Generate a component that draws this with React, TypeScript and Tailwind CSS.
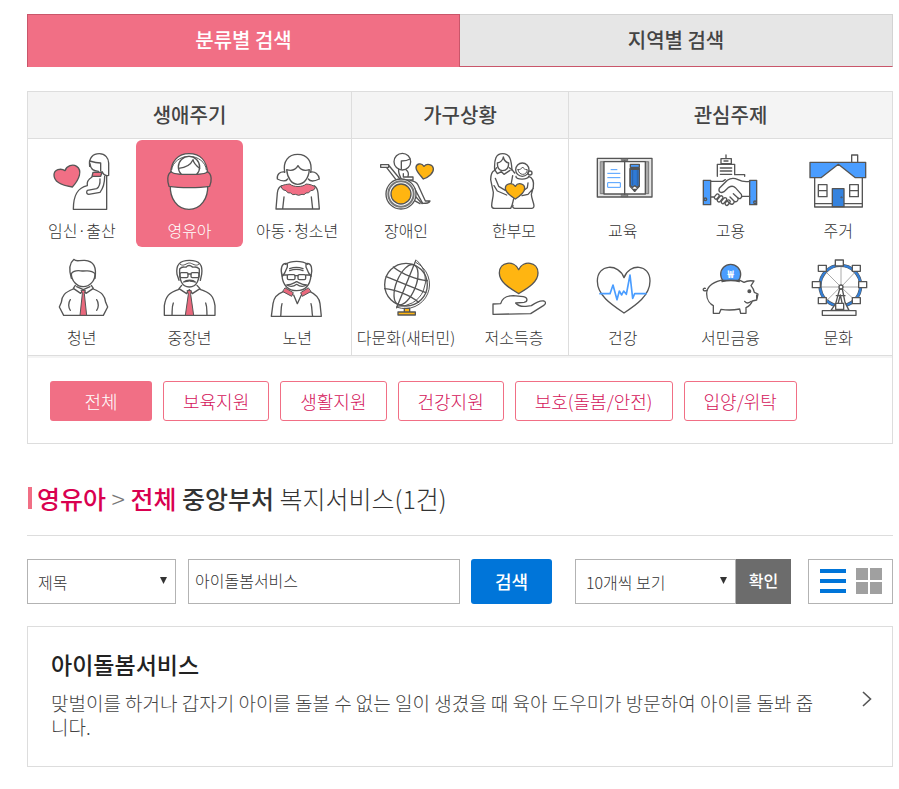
import type { ReactNode } from 'react'

interface Topic {
  label: string
  icon: ReactNode
  active?: boolean
}

interface TopicGroup {
  title: string
  className: string
  gridClassName: string
  topics: Topic[]
}

const PINK = '#f16f85'
const ORANGE = '#ffb511'
const BLUE = '#4a9dff'

function Icon({ viewBox, children }: { viewBox: string; children: ReactNode }) {
  return (
    <svg
      className="size-16"
      viewBox={viewBox}
      fill="none"
      stroke="#555"
      strokeWidth="4"
      strokeLinejoin="round"
      strokeLinecap="round"
      aria-hidden="true"
    >
      {children}
    </svg>
  )
}

const PregnancyIcon = (
  <Icon viewBox="90 45 192 192">
    <path fill={PINK} d="M157 156C130 152 102 142 102 120C102 104 122 98 135 107C140 92 158 86 170 94C188 106 178 134 157 156Z" />
    <path d="M209 94C205 68 220 56 238 56C256 56 266 70 266 84V121C257 124 250 118 246 110" />
    <path d="M209 78C222 82 230 84 242 84V108M210 86C211 100 220 109 236 109" />
    <path fill={PINK} d="M219 112L216 124H242L246 112Z" />
    <path d="M216 126C203 134 200 142 202 152C174 158 160 178 160 223H260V122" />
    <path d="M240 132C241 148 238 156 230 161L202 166C198 172 200 177 206 178L240 172C248 162 254 144 254 124" />
  </Icon>
)

const InfantIcon = (
  <Icon viewBox="412 45 192 192">
    <path fill="#fff" d="M453 116C454 78 476 56 508 56C542 56 562 78 564 116V150C566 190 544 223 508 223C472 223 450 190 452 150Z" />
    <circle cx="508" cy="96" r="32" />
    <path d="M456 104C458 82 482 64 508 64C536 64 558 82 560 104" strokeWidth="3" />
    <path d="M477 100C496 98 512 92 520 74C522 86 532 94 540 100" />
    <path fill={PINK} d="M455 110C441 118 443 140 448 154C480 159 538 159 570 154C576 140 578 118 563 110C558 121 460 121 455 110Z" />
  </Icon>
)

const ChildIcon = (
  <Icon viewBox="75 45 192 192">
    <path d="M134 112C128 78 146 58 173 58C202 58 218 80 212 112" />
    <path d="M140 104C142 130 156 148 173 148C192 148 206 130 208 104C196 108 182 106 174 92C166 106 152 108 140 104Z" />
    <path d="M134 111C120 109 110 118 112 132C124 138 136 142 143 132M212 111C226 109 236 118 238 132C226 138 212 142 205 132" />
    <path d="M126 152C116 156 113 164 112 174L108 222H238L234 174C233 164 230 156 222 152M132 186L128 222M214 186L218 222" />
    <path fill={PINK} d="M122 154C132 148 142 148 150 147C158 157 190 157 198 147C210 148 220 150 226 158q-4 10-14 9q-5 9-14 7q-6 8-12 4q-10 6-20 0q-8 4-14-4q-10 2-14-7q-10 1-16-13Z" strokeWidth="3" />
  </Icon>
)

const DisabilityIcon = (
  <Icon viewBox="402 45 192 192">
    <path d="M422 89H446V97H422ZM448 93L480 132M440 98L468 134" />
    <circle cx="487" cy="80" r="25" />
    <path d="M484 102V78C494 78 504 76 510 72" />
    <path d="M476 102C474 114 480 124 484 132M498 104C506 110 506 118 504 124M490 116V126H519V135H484" />
    <path d="M512 137C524 138 530 142 534 150L556 198H570C568 205 560 205 548 205L522 158" />
    <path d="M528 186L546 206M522 196L540 206" />
    <circle cx="483" cy="177" r="45" fill="#fff" />
    <circle cx="483" cy="177" r="38" strokeWidth="6" stroke="#777" />
    <circle cx="483" cy="177" r="30" fill={ORANGE} />
    <path fill={ORANGE} d="M550 132C540 120 528 108 528 98C528 86 544 82 552 94C560 84 578 88 580 100C582 114 566 126 550 132Z" />
  </Icon>
)

const SingleParentIcon = (
  <Icon viewBox="66 45 192 192">
    <path d="M104 106C102 72 108 56 128 56C150 56 154 74 156 106" />
    <path d="M112 84C112 100 118 107 128 107C140 107 146 98 146 84C138 82 132 76 130 66C128 78 122 82 112 84Z" />
    <path d="M104 104L112 116L124 110L132 118L150 106M110 98L104 106M148 98L156 104L164 114" />
    <path d="M104 106C94 110 92 120 92 134L100 172C100 188 95 200 95 212C95 218 98 220 104 220H152C160 206 158 196 162 190" />
    <path d="M106 130L116 154L136 166M102 152L112 168L140 180M158 122L154 144" />
    <circle cx="187" cy="104" r="20" />
    <path d="M174 104C176 122 200 124 202 104C194 104 190 100 188 96C184 102 180 104 174 104Z" strokeWidth="3" />
    <circle cx="210" cy="114" r="6" />
    <path d="M168 124C164 134 206 136 206 124C218 128 222 142 220 156L214 178C214 190 222 204 222 213Q222 219 216 220H164Q156 219 159 211M204 144L202 158L192 166M220 160L204 178L186 182" />
    <path fill={ORANGE} d="M166 192C150 182 136 172 136 160C136 146 156 140 166 154C174 140 194 146 194 160C194 172 182 182 166 192Z" />
  </Icon>
)

const EducationIcon = (
  <Icon viewBox="393 45 192 192">
    <rect x="412" y="70" width="164" height="116" fill="#e4e4e4" />
    <path fill="#aaa" strokeWidth="2" d="M422 80H432V176H422ZM556 80H566V176H556Z" />
    <rect x="432" y="80" width="124" height="97" fill="#fff" />
    <path fill="#888" strokeWidth="2" d="M485 71H503V77H485ZM485 178H503V185H485Z" />
    <path d="M494 78V178" />
    <g stroke={BLUE} strokeLinecap="butt">
      <path d="M452 104H472M442 115H481M442 128H481" strokeWidth="3" />
      <rect x="443" y="143" width="38" height="14" strokeWidth="3" />
    </g>
    <path fill="#fff" d="M510 154L524 169L538 154V100H510Z" />
    <path fill="#2f7ad6" d="M511 103H538V152L531 157L524 152L518 157L511 152Z" />
    <path d="M518 106V150M532 106V150" stroke="#2a5792" strokeWidth="2" />
    <rect x="511" y="88" width="27" height="9" fill={BLUE} />
    <path fill="#444" d="M520 163H528L524 169Z" />
  </Icon>
)

const EmploymentIcon = (
  <Icon viewBox="86 45 192 192">
    <path d="M170 60V70M155 71H186V86H155ZM164 78H176M144 124V88H196V119H226V124" />
    <path d="M153 99H187M153 108H187M153 118H187" />
    <path fill={BLUE} d="M102 136H124V209H102ZM241 136H262V209H241Z" />
    <circle cx="108" cy="193" r="4" />
    <circle cx="257" cy="202" r="4" />
    <path d="M124 139H160L168 134M241 139C222 142 214 138 206 134C194 128 182 130 174 136L150 160C146 170 154 176 164 170L178 157C186 152 192 152 198 158L216 178C220 188 212 194 206 189L192 176" />
    <path d="M124 186H134M241 184H219M206 189C208 198 200 203 194 198L182 186M194 198C196 206 188 210 182 206L174 198" />
    <rect x="134" y="180" width="17" height="10" rx="5" transform="rotate(-50 142 185)" />
    <rect x="142" y="187" width="21" height="10" rx="5" transform="rotate(-50 152 192)" />
    <rect x="154" y="192" width="20" height="10" rx="5" transform="rotate(-50 164 197)" />
    <rect x="166" y="198" width="18" height="10" rx="5" transform="rotate(-50 175 203)" />
  </Icon>
)

const HousingIcon = (
  <Icon viewBox="409 45 192 192">
    <path d="M546 82V60H564V82M435 128V216H578V128M435 206H488M524 206H578" />
    <path fill={BLUE} d="M421 82H588V128H557L506 88L454 128H421Z" />
    <path d="M446 149H472V185H446ZM446 167H472M540 149H566V185H540ZM540 167H566" />
    <path fill="#3583df" d="M488 161H523V215H488Z" />
    <circle cx="515" cy="187" r="2" strokeWidth="2" />
  </Icon>
)

const YouthIcon = (
  <Icon viewBox="90 36 192 192">
    <path d="M154 100C148 80 146 56 162 43C168 52 178 45 194 46C222 48 230 66 225 100" />
    <path d="M154 86C164 72 178 78 190 78C204 78 214 74 225 86C226 108 208 125 190 125C172 125 154 108 154 86Z" />
    <path d="M166 121L160 130L182 145L190 134L198 145L220 130L214 121M170 125L190 134L210 125" />
    <path d="M160 132C134 142 126 152 124 172L118 186L131 211H250L263 186L257 172C254 152 246 142 220 132M151 164C144 174 145 188 151 196M230 164C237 174 236 188 230 196" />
    <path fill="#e9687c" d="M184 136H196L193 146L200 211H180L187 146Z" strokeWidth="3" />
  </Icon>
)

const MiddleAgedIcon = (
  <Icon viewBox="412 36 192 192">
    <path d="M472 88C468 60 480 46 509 46C540 46 550 60 546 88L542 106M472 88L478 106" />
    <path d="M480 72C478 104 486 126 509 126C532 126 540 104 539 72C530 62 524 68 518 66C512 60 504 60 500 66C494 68 488 62 480 72Z" />
    <path d="M482 58C492 66 500 54 509 54C518 54 528 66 537 58" strokeWidth="3" />
    <rect x="481" y="83" width="24" height="15" rx="4" />
    <rect x="514" y="83" width="24" height="15" rx="4" />
    <path d="M505 87H514" />
    <path fill="#505050" d="M492 111C500 104 520 104 527 111C518 108 514 110 509 107C504 110 500 108 492 111Z" />
    <path d="M486 121L478 131L501 146L509 134L518 146L541 131L532 121" />
    <path d="M478 133C448 142 438 154 434 182V211H586V182C582 154 572 142 541 133M461 174C456 186 458 198 457 211M558 174C563 186 561 198 562 211" />
    <path fill="#e9687c" d="M503 137H515L513 148L522 211H497L506 148Z" strokeWidth="3" />
  </Icon>
)

const SeniorIcon = (
  <Icon viewBox="75 36 192 192">
    <path d="M137 58C152 46 188 46 202 58" />
    <path d="M142 56C124 52 120 74 127 94L134 84L142 66ZM198 56C216 52 218 74 213 94L206 84L198 66Z" />
    <path d="M126 92C128 122 146 137 170 137C194 137 210 122 213 92M130 90H142M198 90H210" />
    <path d="M149 71C160 67 178 67 189 71M149 77C160 73 178 73 189 77" />
    <rect x="142" y="89" width="23" height="15" rx="4" />
    <rect x="174" y="89" width="23" height="15" rx="4" />
    <path d="M165 92H174M140 120C156 120 164 112 170 110C176 112 184 120 200 120C190 126 178 124 170 118C162 124 150 126 140 120Z" />
    <path d="M130 140C108 148 101 160 99 176L94 214H244L240 176C238 160 228 148 210 140M126 176C122 190 124 202 122 214M213 176C217 190 215 202 218 214M161 150L172 176L184 150" />
    <path fill="#e9687c" d="M136 129L160 143L155 154L129 140ZM204 129L182 143L187 154L212 140Z" strokeWidth="3" />
  </Icon>
)

const MulticulturalIcon = (
  <Icon viewBox="402 36 192 192">
    <circle cx="498" cy="119" r="64" />
    <g transform="rotate(22 498 119)">
      <ellipse cx="498" cy="119" rx="29" ry="64" />
      <path d="M498 40V194M434 119H562M443 84C474 94 522 94 553 84M443 154C474 144 522 144 553 154" />
    </g>
    <path d="M529 53A73 73 0 0 1 472 187M531 47A79 79 0 0 1 470 184" strokeWidth="3" />
    <path fill={ORANGE} d="M493 190H509V201H493ZM474 201H526V210H474Z" />
  </Icon>
)

const LowIncomeIcon = (
  <Icon viewBox="66 36 192 192">
    <path fill={ORANGE} d="M176 146C150 130 118 112 118 84C118 50 162 44 176 74C190 44 234 50 234 84C234 112 202 130 176 146Z" />
    <path d="M99 208V177L122 176C126 160 140 152 160 152L190 155C204 157 204 170 192 172L167 174C176 186 186 184 198 184L214 182C228 172 242 166 252 168C260 172 256 178 250 182L212 206Z" />
  </Icon>
)

const HealthIcon = (
  <Icon viewBox="393 36 192 192">
    <path d="M492 204C456 180 412 152 412 108C412 56 476 54 492 98C508 54 570 56 570 108C570 152 528 180 492 204Z" />
    <path stroke={BLUE} strokeWidth="5" d="M420 146H450L459 120L471 164L478 138L485 150L491 138L499 148L510 90L518 160L524 146H558" />
  </Icon>
)

const FinanceIcon = (
  <Icon viewBox="86 36 192 192">
    <circle cx="184" cy="88" r="30" fill={BLUE} />
    <path fill="#fff" d="M154 106C124 114 112 128 112 146C112 166 124 178 132 182V205H150L155 193C174 196 190 196 211 192L214 205H230V188C240 183 246 177 249 168L262 165L266 147L255 142C253 132 250 128 245 122L254 108C240 106 232 107 224 112L212 106Z" />
    <path d="M158 110C174 106 196 106 210 110M112 136C100 142 98 128 108 130" />
    <circle cx="240" cy="139" r="4" fill="#505050" />
    <path d="M226 169C232 176 240 174 246 169M262 150V160" />
    <text x="184" y="98" textAnchor="middle" fill="#fff" stroke="none" fontSize="32" className="font-['Noto_Sans_CJK_KR',sans-serif] font-bold">₩</text>
  </Icon>
)

const CABINS = [
  [509, 54],
  [458, 70],
  [560, 70],
  [440, 119],
  [579, 119],
  [458, 167],
  [560, 167],
  [510, 184],
]

const CultureIcon = (
  <Icon viewBox="409 36 192 192">
    <circle cx="512" cy="122" r="61" strokeWidth="10" />
    <circle cx="512" cy="122" r="61" stroke="#347fd6" strokeWidth="7" />
    <path stroke="#aaa" strokeWidth="3" d="M514 66V120M458 126H568M472 84L510 122M554 84L518 122M472 166L510 128M556 166L518 130" />
    <path fill="#fff" d="M510 132L498 176L484 196H500L512 150L522 196H538L526 172L518 132Z" />
    <path d="M500 152H526" />
    <circle cx="514" cy="126" r="6" fill="#fff" />
    {CABINS.map(([x, y]) => (
      <rect key={`${x}-${y}`} x={x - 12} y={y - 9} width="24" height="18" fill="#fff" />
    ))}
    <rect x="458" y="197" width="101" height="14" fill="#fff" />
  </Icon>
)

const groups: TopicGroup[] = [
  {
    title: '생애주기',
    className: 'border-r',
    gridClassName: 'grid-cols-3',
    topics: [
      { label: '임신·출산', icon: PregnancyIcon },
      { label: '영유아', icon: InfantIcon, active: true },
      { label: '아동·청소년', icon: ChildIcon },
      { label: '청년', icon: YouthIcon },
      { label: '중장년', icon: MiddleAgedIcon },
      { label: '노년', icon: SeniorIcon },
    ],
  },
  {
    title: '가구상황',
    className: '',
    gridClassName: 'grid-cols-2',
    topics: [
      { label: '장애인', icon: DisabilityIcon },
      { label: '한부모', icon: SingleParentIcon },
      { label: '다문화(새터민)', icon: MulticulturalIcon },
      { label: '저소득층', icon: LowIncomeIcon },
    ],
  },
  {
    title: '관심주제',
    className: 'border-l',
    gridClassName: 'grid-cols-3',
    topics: [
      { label: '교육', icon: EducationIcon },
      { label: '고용', icon: EmploymentIcon },
      { label: '주거', icon: HousingIcon },
      { label: '건강', icon: HealthIcon },
      { label: '서민금융', icon: FinanceIcon },
      { label: '문화', icon: CultureIcon },
    ],
  },
]

const filters = ['보육지원', '생활지원', '건강지원', '보호(돌봄/안전)', '입양/위탁']

function Caret() {
  return (
    <svg className="pointer-events-none absolute top-[18px] right-[9px] h-2 w-[7px]" viewBox="0 0 7 8" aria-hidden="true">
      <path d="M0 0H7L3.5 7Z" fill="#333" />
    </svg>
  )
}

export default function App() {
  return (
    <main className="bg-white pt-[14px] pr-[6px] pb-6 pl-[27px] font-['Noto_Sans_CJK_KR',sans-serif] font-light text-[#333]">
      {/* 탭 */}
      <nav className="grid grid-cols-2 text-xl font-medium">
        <a href="#category" className="flex h-[53px] items-center justify-center border border-b-0 border-[#c9566a] bg-[#f16f85] pb-[3px] text-white">
          분류별 검색
        </a>
        <a href="#region" className="flex h-[53px] items-center justify-center border border-l-0 border-[#d3d3d3] border-b-[#c9566a] bg-[#e6e6e6] pb-[2px] text-[#444]">
          지역별 검색
        </a>
      </nav>

      {/* 분류 선택 */}
      <section className="mt-6 border border-[#ddd]">
        <div className="grid grid-cols-[3fr_2fr_3fr] border-b border-[#ddd]">
          {groups.map((group) => (
            <div key={group.title} className={`border-[#ddd] ${group.className}`}>
              <h2 className="flex h-[47px] items-center justify-center border-b border-[#ddd] bg-[#f4f4f4] text-xl font-medium text-[#444]">
                {group.title}
              </h2>
              <ul className={`grid py-px ${group.gridClassName}`}>
                {group.topics.map((topic) => (
                  <li key={topic.label}>
                    <a
                      href="#topic"
                      className={`flex flex-col items-center rounded-md pt-[10px] pb-[5px] ${topic.active ? 'bg-[#f16f85] text-white' : ''}`}
                    >
                      {topic.icon}
                      <span className="mt-1 text-base leading-6 whitespace-nowrap">{topic.label}</span>
                    </a>
                  </li>
                ))}
              </ul>
            </div>
          ))}
        </div>
        <div className="flex flex-wrap gap-[11px] border-t-2 border-[#f4f4f4] px-[22px] pt-[23px] pb-[22px] text-lg">
          <button type="button" className="h-10 w-[102px] rounded-[3px] bg-[#f16f85] text-white">
            전체
          </button>
          {filters.map((filter) => (
            <button key={filter} type="button" className="h-10 rounded-[3px] border border-[#f16f85] px-[19px] text-[#d4145a]">
              {filter}
            </button>
          ))}
        </div>
      </section>

      {/* 검색 결과 제목 */}
      <div className="mt-9 flex items-center gap-[5px] border-b border-[#ddd] pb-[19px] pl-px">
        <span className="h-[22px] w-1 bg-[#f16f85]" />
        <h1 className="text-[25px] leading-9">
          <span className="font-medium text-[#d9004f]">영유아</span>
          <span className="text-[#777]"> &gt; </span>
          <span className="font-medium text-[#d9004f]">전체</span> <span className="font-medium">중앙부처</span> 복지서비스(1건)
        </h1>
      </div>

      {/* 검색 조건 */}
      <form className="mt-[23px] flex h-[45px] text-base" onSubmit={(e) => e.preventDefault()}>
        <div className="relative mr-3 w-[149px]">
          <select aria-label="검색 구분" className="h-full w-full appearance-none border border-[#b3b3b3] bg-white pl-[10px]">
            <option>제목</option>
          </select>
          <Caret />
        </div>
        <input
          type="text"
          aria-label="검색어"
          defaultValue="아이돌봄서비스"
          className="mr-[11px] min-w-0 flex-1 border border-[#b3b3b3] px-[6px] pb-1"
        />
        <button type="submit" className="mr-[23px] w-[81px] rounded-[3px] bg-[#0075d9] pb-px text-lg font-medium text-white">
          검색
        </button>
        <div className="relative w-[161px]">
          <select aria-label="목록 개수" className="h-full w-full appearance-none border border-[#b3b3b3] bg-white pl-[10px]">
            <option>10개씩 보기</option>
          </select>
          <Caret />
        </div>
        <button type="button" className="mr-[17px] w-[55px] bg-[#6c6c6c] pb-1 font-medium text-white">
          확인
        </button>
        <div className="flex w-[85px] items-center justify-center gap-[10px] border border-[#b3b3b3] pb-px">
          <button type="button" aria-label="목록형 보기">
            <svg className="size-[26px]" viewBox="0 0 26 26" fill="#0075d9" aria-hidden="true">
              <path d="M0 1H26V5H0ZM0 11H26V15H0ZM0 21H26V25H0Z" />
            </svg>
          </button>
          <button type="button" aria-label="격자형 보기">
            <svg className="size-[26px]" viewBox="0 0 26 26" fill="#a0a0a0" aria-hidden="true">
              <path d="M0 0H12V12H0ZM14 0H26V12H14ZM0 14H12V26H0ZM14 14H26V26H14Z" />
            </svg>
          </button>
        </div>
      </form>

      {/* 검색 결과 목록 */}
      <a href="#service" className="mt-[22px] flex items-center justify-between border border-[#ddd] py-[22px] pr-5 pl-[23px]">
        <div className="pr-10">
          <h3 className="text-[23px] leading-[30px] font-medium text-[#222]">아이돌봄서비스</h3>
          <p className="mt-3 mb-[5px] text-[19px] leading-6 text-[#444]">
            맞벌이를 하거나 갑자기 아이를 돌볼 수 없는 일이 생겼을 때 육아 도우미가 방문하여 아이를 돌봐 줍니다.
          </p>
        </div>
        <svg className="mt-1 h-4 w-[10px] shrink-0" viewBox="0 0 10 16" fill="none" stroke="#555" strokeWidth="1.6" aria-hidden="true">
          <path d="M1 1L8.500 8L1 15" />
        </svg>
      </a>
    </main>
  )
}
